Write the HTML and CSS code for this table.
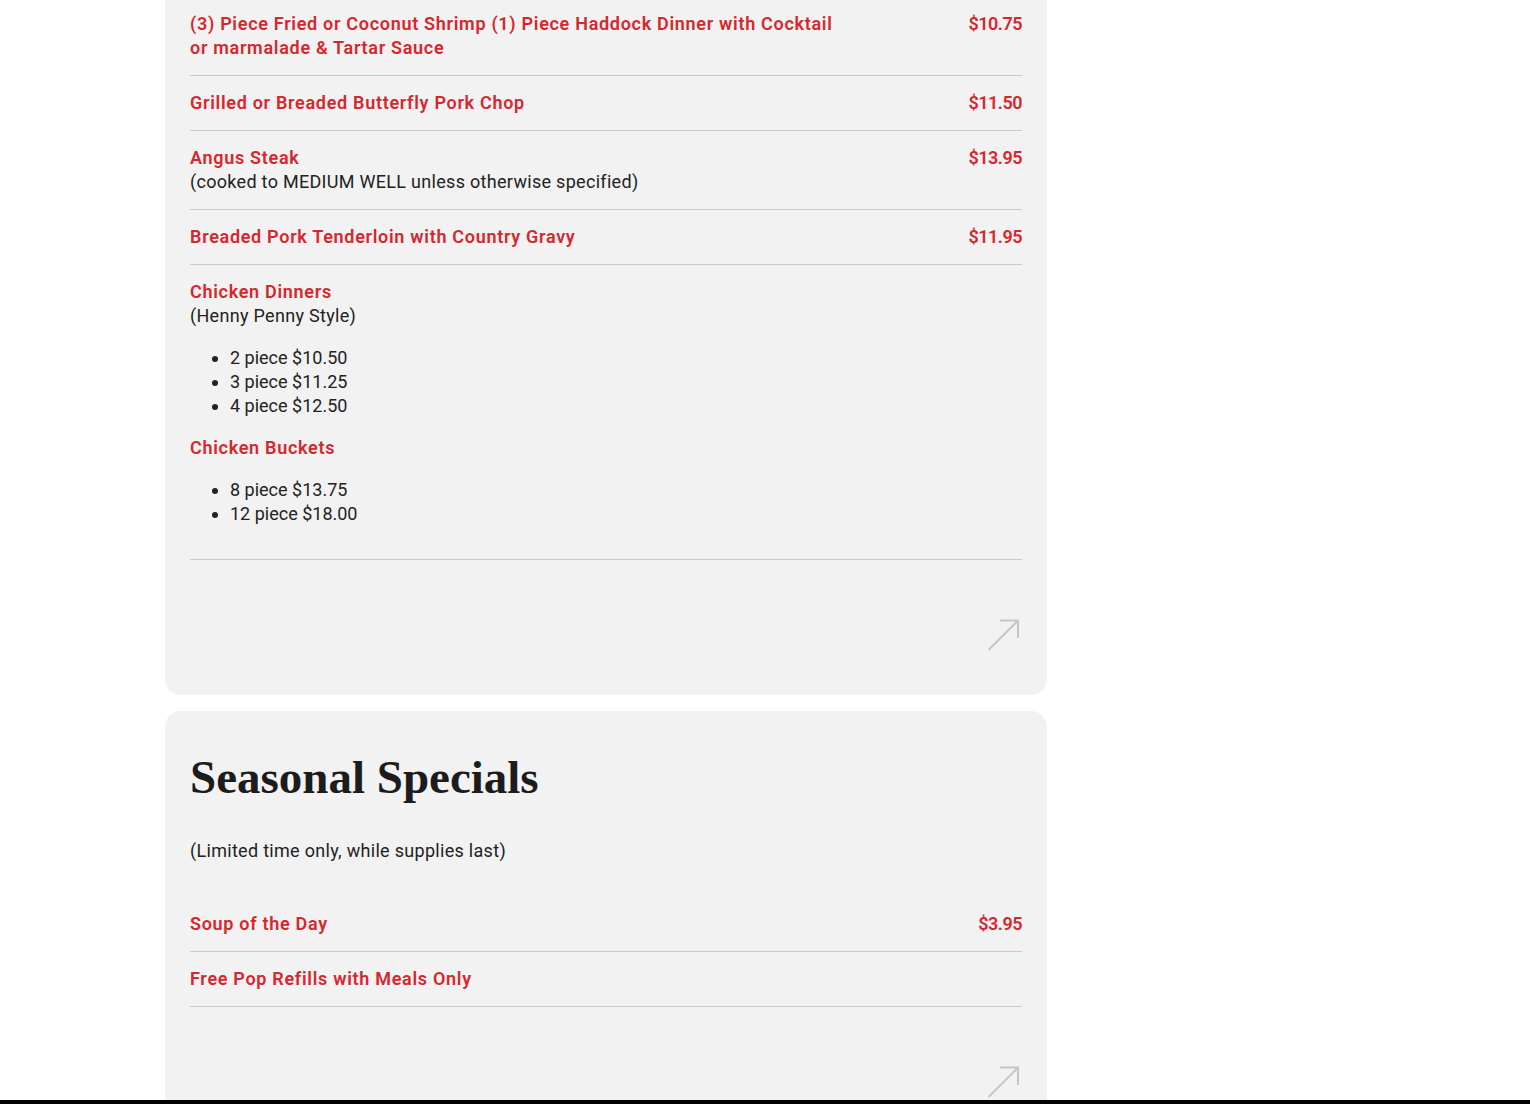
FILE: index.html
```html
<!DOCTYPE html>
<html lang="en">
<head>
    <meta charset="UTF-8">
    <meta name="viewport" content="width=device-width, initial-scale=1.0">
    <title>Menu</title>
    <link rel="stylesheet" href="styles.css">
</head>
<body>

    <div class="menu">

        <div class="card card-cut">
            <div class="item">
                <div class="item-name">(3) Piece Fried or Coconut Shrimp (1) Piece Haddock Dinner with Cocktail or marmalade &amp; Tartar Sauce</div>
                <div class="item-price">$10.75</div>
            </div>
            <div class="item">
                <div class="item-name">Grilled or Breaded Butterfly Pork Chop</div>
                <div class="item-price">$11.50</div>
            </div>
            <div class="item">
                <div>
                    <div class="item-name">Angus Steak</div>
                    <div class="item-desc">(cooked to MEDIUM WELL unless otherwise specified)</div>
                </div>
                <div class="item-price">$13.95</div>
            </div>
            <div class="item">
                <div class="item-name">Breaded Pork Tenderloin with Country Gravy</div>
                <div class="item-price">$11.95</div>
            </div>
            <div class="item item-block">
                <div class="item-name">Chicken Dinners</div>
                <div class="item-desc">(Henny Penny Style)</div>
                <ul>
                    <li>2 piece $10.50</li>
                    <li>3 piece $11.25</li>
                    <li>4 piece $12.50</li>
                </ul>
                <div class="item-name">Chicken Buckets</div>
                <ul>
                    <li>8 piece $13.75</li>
                    <li>12 piece $18.00</li>
                </ul>
            </div>
            <div class="card-foot">
                <svg class="arrow" width="32" height="32" viewBox="0 0 32 32"><path d="M1.5 31 L31 1.5 M13 1.5 H31 V19"/></svg>
            </div>
        </div>

        <div class="card">
            <h2 class="card-title">Seasonal Specials</h2>
            <p class="card-note">(Limited time only, while supplies last)</p>
            <div class="item">
                <div class="item-name">Soup of the Day</div>
                <div class="item-price">$3.95</div>
            </div>
            <div class="item">
                <div class="item-name">Free Pop Refills with Meals Only</div>
            </div>
            <div class="card-foot">
                <svg class="arrow" width="32" height="32" viewBox="0 0 32 32"><path d="M1.5 31 L31 1.5 M13 1.5 H31 V19"/></svg>
            </div>
        </div>

    </div>

    <div class="bottom-bar"></div>

</body>
</html>
```

FILE: styles.css
```css
body {
    margin: 0;
    background: white;
    font-family: Roboto, "Noto Sans", sans-serif;
    font-size: 18px;
    line-height: 24px;
    color: #222;
}
.menu {
    width: 882px;
    margin-left: 165px;
    display: flex;
    flex-direction: column;
    gap: 16px;
}
.card {
    background-color: #f2f2f2;
    border-radius: 16px;
    padding: 39px 25px 44px;
}
.card-cut {
    padding-top: 0;
    border-top-left-radius: 0;
    border-top-right-radius: 0;
}
.card-title {
    margin: 0;
    font-family: "Liberation Serif", serif;
    font-weight: bold;
    font-size: 47px;
    line-height: 54px;
    color: #1c1c1c;
}
.card-note {
    margin: 35px 0 34px;
    letter-spacing: 0.3px;
}
.item {
    display: flex;
    justify-content: space-between;
    gap: 40px;
    padding: 12px 0 15px;
    border-bottom: 1px solid #cbcbcb;
}
.card .item + .item {
    padding-top: 15px;
}
.card-note + .item {
    padding-top: 15px;
}
.item-block {
    display: block;
}
.item-name {
    color: #d7262d;
    font-weight: 600;
    letter-spacing: 0.7px;
    max-width: 650px;
}
.item-desc {
    letter-spacing: 0.3px;
}
.item-price {
    color: #d7262d;
    font-weight: 600;
    letter-spacing: -0.5px;
    white-space: nowrap;
}
.item ul {
    margin: 18px 0;
    padding-left: 40px;
}
.card-foot {
    display: flex;
    justify-content: flex-end;
    padding-top: 59px;
    padding-right: 3px;
}
.arrow {
    display: block;
    fill: none;
    stroke: #c6c6c6;
    stroke-width: 2;
}
.bottom-bar {
    position: fixed;
    left: 0;
    right: 0;
    bottom: 0;
    height: 4px;
    background: black;
}
```
